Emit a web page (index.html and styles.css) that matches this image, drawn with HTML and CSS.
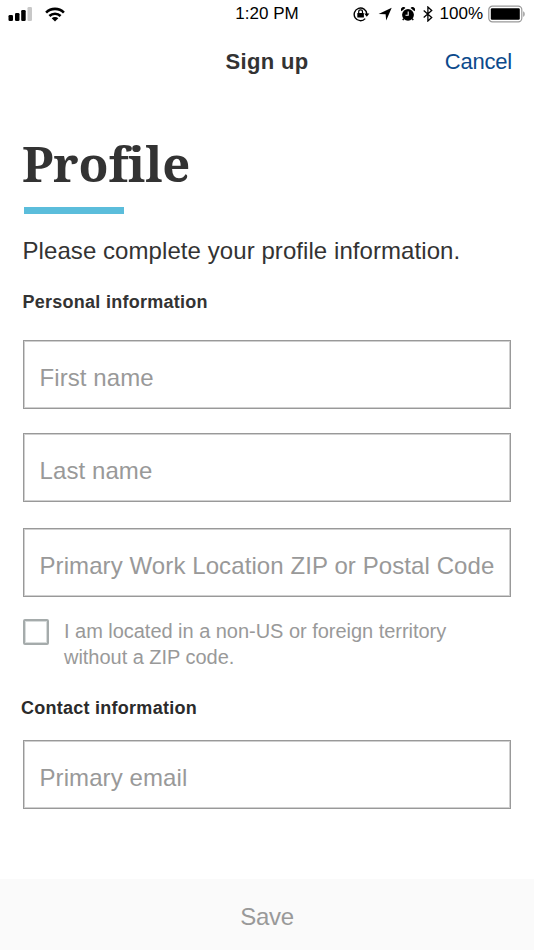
FILE: index.html
```html
<!DOCTYPE html>
<html lang="en">
<head>
    <meta charset="UTF-8">
    <meta name="viewport" content="width=device-width, initial-scale=1.0">
    <title>Sign up</title>
    <link rel="stylesheet" href="styles.css">
</head>
<body>
    <div class="screen">
        <div class="status-bar">
            <div class="status-left">
                <svg width="24" height="16" viewBox="0 0 24 16">
                    <rect x="0.5" y="9" width="4.5" height="6" rx="1.3"/>
                    <rect x="7" y="7" width="4.5" height="8" rx="1.3"/>
                    <rect x="13.2" y="4" width="4.5" height="11" rx="1.3"/>
                    <rect x="19.5" y="1" width="4.5" height="14" rx="1.3" fill="#c8c8c8"/>
                </svg>
                <svg class="wifi" width="20" height="15" viewBox="0 0 20 15">
                    <g fill="none" stroke="#000" stroke-width="2.6">
                        <path d="M1.1 5.6a12.6 12.6 0 0 1 17.8 0"/>
                        <path d="M4.4 9a8 8 0 0 1 11.2 0"/>
                    </g>
                    <path d="M6.7 11.3a4.7 4.7 0 0 1 6.6 0L10 14.6z"/>
                </svg>
            </div>
            <div class="time">1:20 PM</div>
            <div class="status-right">
                <svg width="17" height="16" viewBox="0 0 17 16">
                    <path d="M12.2 12.6A6.3 6.3 0 1 1 13.8 8" fill="none" stroke="#000" stroke-width="1.4"/>
                    <path d="M11.2 7.5h5.2l-2.6 3.2z"/>
                    <rect x="4.3" y="7" width="6.6" height="4.6" rx="0.5"/>
                    <path d="M5.7 7.2V5.8a1.9 1.9 0 0 1 3.8 0v1.4" fill="none" stroke="#000" stroke-width="1.2"/>
                </svg>
                <svg class="location" width="14" height="14" viewBox="0 0 14 14">
                    <path d="M13.7 0.7L8.2 13.4 7.6 7.2 0.6 6.9z"/>
                </svg>
                <svg class="alarm" width="14" height="14" viewBox="0 0 14 14">
                    <circle cx="7" cy="7.8" r="5.9"/>
                    <path d="M0.5 4.3A2.4 2.4 0 0 1 4.4 1M13.5 4.3A2.4 2.4 0 0 0 9.6 1"/>
                    <path d="M2.8 11.5L1.8 13.2M11.2 11.5l1 1.7" stroke="#000" stroke-width="1.4"/>
                    <path d="M7.2 4.5V8.2H4.5" fill="none" stroke="#fff" stroke-width="1.1"/>
                </svg>
                <svg class="bluetooth" width="10" height="16" viewBox="0 0 10 16">
                    <path d="M0.7 4.5L8.7 11.5 4.9 15V1L8.7 4.5 0.7 11.5" fill="none" stroke="#000" stroke-width="1.3"/>
                </svg>
                <span class="percent">100%</span>
                <svg class="battery" width="38" height="18" viewBox="0 0 38 18">
                    <rect x="0.8" y="1.2" width="33" height="15.6" rx="3.6" fill="#fff" stroke="#999" stroke-width="1.2"/>
                    <rect x="2.8" y="3.2" width="29" height="11.6" rx="1.2"/>
                    <path d="M35.2 6.2v5.6c2-.8 2-4.8 0-5.6z" fill="#999"/>
                </svg>
            </div>
        </div>

        <div class="nav">
            <div class="nav-title">Sign up</div>
            <a class="cancel">Cancel</a>
        </div>

        <form class="content">
            <h1>Profile</h1>
            <div class="rule"></div>
            <p class="intro">Please complete your profile information.</p>

            <h2>Personal information</h2>
            <input class="field" type="text" placeholder="First name">
            <input class="field" type="text" placeholder="Last name">
            <input class="field zip" type="text" placeholder="Primary Work Location ZIP or Postal Code">

            <label class="check-row">
                <span class="checkbox"></span>
                <span>I am located in a non-US or foreign territory<br>without a ZIP code.</span>
            </label>

            <h2 class="contact">Contact information</h2>
            <input class="field" type="text" placeholder="Primary email">
        </form>

        <div class="footer">Save</div>
    </div>
</body>
</html>
```
FILE: styles.css
```css
* {
    box-sizing: border-box;
}

body {
    margin: 0;
    background: #fff;
    font-family: "Liberation Sans", Arial, sans-serif;
    color: #333;
}

.screen {
    width: 534px;
    height: 950px;
    display: flex;
    flex-direction: column;
    overflow: hidden;
}

svg {
    display: block;
    flex: none;
}

.status-bar {
    display: grid;
    grid-template-columns: 1fr auto 1fr;
    align-items: center;
    height: 28px;
    padding: 0 8px;
    font-size: 17px;
    color: #000;
}

.status-left {
    display: flex;
    align-items: center;
}

.wifi {
    margin-left: 13px;
}

.status-right {
    display: flex;
    align-items: center;
    justify-content: flex-end;
}

.location {
    margin-left: 8px;
}

.alarm {
    margin-left: 9px;
}

.bluetooth {
    margin-left: 8px;
}

.percent {
    margin-left: 7px;
}

.battery {
    margin-left: 5px;
}

.nav {
    display: grid;
    grid-template-columns: 1fr auto 1fr;
    align-items: center;
    height: 67px;
    padding: 0 22px;
    font-size: 22px;
}

.nav-title {
    grid-column: 2;
    font-weight: bold;
    letter-spacing: 0.35px;
}

.cancel {
    justify-self: end;
    color: #0c4a8c;
    letter-spacing: -0.2px;
}

.content {
    display: flex;
    flex-direction: column;
    flex: 1;
    padding: 0 23px;
}

h1 {
    margin: 38px 0 0 -1px;
    font-family: "Noto Serif", "Droid Serif", "DejaVu Serif Condensed", "DejaVu Serif", serif;
    font-size: 49px;
    font-weight: bold;
    line-height: 60px;
    letter-spacing: -0.2px;
}

.rule {
    width: 100px;
    height: 7px;
    margin: 14px 0 0 1px;
    background: #5bbddb;
}

.intro {
    margin: 22px 0 0 -0.5px;
    font-size: 24px;
    line-height: 30px;
    letter-spacing: 0.07px;
}

h2 {
    margin: 26px 0 28px -0.5px;
    font-size: 18px;
    line-height: 20px;
    letter-spacing: 0.26px;
}

.field {
    width: 488px;
    height: 69px;
    margin: 0 0 24px;
    padding: 7px 12px 0 15.5px;
    border: 1px solid #999;
    border-radius: 0;
    box-shadow: inset 0 0 0 1px #d0d0d0;
    font-family: inherit;
    font-size: 24px;
    letter-spacing: 0.09px;
}

.field::placeholder {
    color: #999;
    opacity: 1;
}

.zip {
    margin-top: 2px;
    margin-bottom: 21px;
}

.check-row {
    display: flex;
    gap: 15px;
    font-size: 20px;
    line-height: 26px;
    letter-spacing: -0.03px;
    color: #999;
}

.checkbox {
    width: 26px;
    height: 26px;
    margin-top: 1px;
    border: 2px solid #a5abab;
    border-radius: 2px;
    box-shadow: inset 0 0 0 1px #d8dcdc;
}

.contact {
    margin: 28px 0 22px -2px;
    color: #2b2b2b;
}

.footer {
    height: 71px;
    background: #fafafa;
    color: #999;
    font-size: 24px;
    line-height: 76px;
    letter-spacing: -0.3px;
    text-align: center;
}
```
